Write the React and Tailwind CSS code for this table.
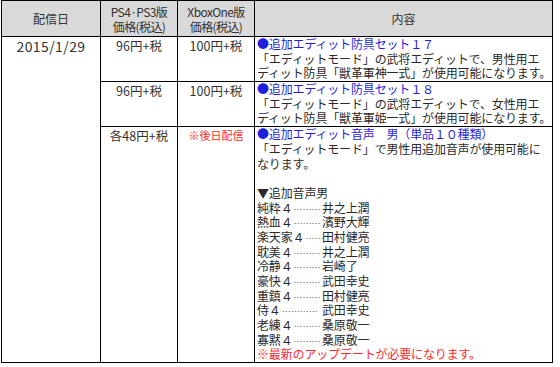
import React from "react";

const voices = [
  ["純粋４", "………", "井之上潤"],
  ["熱血４", "………", "濱野大輝"],
  ["楽天家４", "……", "田村健亮"],
  ["耽美４", "………", "井之上潤"],
  ["冷静４", "………", "岩崎了"],
  ["豪快４", "………", "武田幸史"],
  ["重鎮４", "………", "田村健亮"],
  ["侍４", "…………", "武田幸史"],
  ["老練４", "………", "桑原敬一"],
  ["寡黙４", "………", "桑原敬一"],
];

function Line({ children, className = "" }) {
  return <div className={"whitespace-nowrap h-[14.7px] leading-[14.7px] " + className}>{children}</div>;
}

export default function App() {
  return (
    <div
      className="w-[560px] h-[367px] bg-white pl-[1px] text-[#2a2a2a]"
      style={{ fontFamily: '"Noto Sans CJK JP", "Noto Sans", sans-serif' }}
    >
      <table className="table-fixed border-collapse w-[551px]">
        <colgroup>
          <col className="w-[99px]" />
          <col className="w-[77px]" />
          <col className="w-[77px]" />
          <col className="w-[298px]" />
        </colgroup>
        <thead>
          <tr className="h-[36px] bg-[#d9d9d9] text-[#333]">
            <th className="border border-black font-normal text-[12px] text-center align-middle p-0">配信日</th>
            <th className="border border-black font-normal text-[12px] leading-[15px] text-center align-middle p-0 tracking-[-0.6px]">
              PS4·PS3版<br />価格(税込)
            </th>
            <th className="border border-black font-normal text-[12px] leading-[15px] text-center align-middle p-0 tracking-[-0.6px]">
              XboxOne版<br />価格(税込)
            </th>
            <th className="border border-black font-normal text-[12px] text-center align-middle p-0">内容</th>
          </tr>
        </thead>
        <tbody className="text-[12px]">
          <tr>
            <td rowSpan={3} className="border border-black align-top text-center p-0 pt-[1px] text-[14px] leading-[16px] tracking-[0.4px] text-[#333]">
              2015/1/29
            </td>
            <td className="border border-black align-top text-center p-0 pt-[1px] text-[12.5px] leading-[15px] text-[#333]">96円+税</td>
            <td className="border border-black align-top text-center p-0 pt-[1px] text-[12.5px] leading-[15px] text-[#333]">100円+税</td>
            <td className="border border-black align-top p-0 pl-[2px] tracking-[-0.15px]">
              <Line className="text-[#1f1fdd]">●追加エディット防具セット１７</Line>
              <Line>「エディットモード」の武将エディットで、男性用エ</Line>
              <Line>ディット防具「獣革軍神一式」が使用可能になります。</Line>
            </td>
          </tr>
          <tr>
            <td className="border border-black align-top text-center p-0 pt-[1px] text-[12.5px] leading-[15px] text-[#333]">96円+税</td>
            <td className="border border-black align-top text-center p-0 pt-[1px] text-[12.5px] leading-[15px] text-[#333]">100円+税</td>
            <td className="border border-black align-top p-0 pl-[2px] tracking-[-0.15px]">
              <Line className="text-[#1f1fdd]">●追加エディット防具セット１８</Line>
              <Line>「エディットモード」の武将エディットで、女性用エ</Line>
              <Line>ディット防具「獣革軍姫一式」が使用可能になります。</Line>
            </td>
          </tr>
          <tr>
            <td className="border border-black align-top text-center p-0 pt-[1px] text-[12.5px] leading-[15px] text-[#333]">各48円+税</td>
            <td className="border border-black align-top text-center p-0 pt-[1px] leading-[15px] text-[11px] text-[#ff2a2a]">※後日配信</td>
            <td className="border border-black align-top p-0 pl-[2px] tracking-[-0.15px]">
              <Line className="text-[#1f1fdd]">●追加エディット音声　男（単品１０種類）</Line>
              <Line>「エディットモード」で男性用追加音声が使用可能に</Line>
              <Line>なります。</Line>
              <Line>{"\u00a0"}</Line>
              <Line>▼追加音声男</Line>
              {voices.map(([a, d, b], i) => (
                <div key={i} className="flex items-baseline h-[14.7px] leading-[14.7px] whitespace-nowrap">
                  <div className="flex items-baseline w-[65px]">
                    <span>{a}</span>
                    <span className="text-[9px] tracking-[0px] text-[#555] pl-[1px]">{d}</span>
                  </div>
                  <span>{b}</span>
                </div>
              ))}
              <Line className="text-[#ff2a2a]">※最新のアップデートが必要になります。</Line>
            </td>
          </tr>
        </tbody>
      </table>
    </div>
  );
}
